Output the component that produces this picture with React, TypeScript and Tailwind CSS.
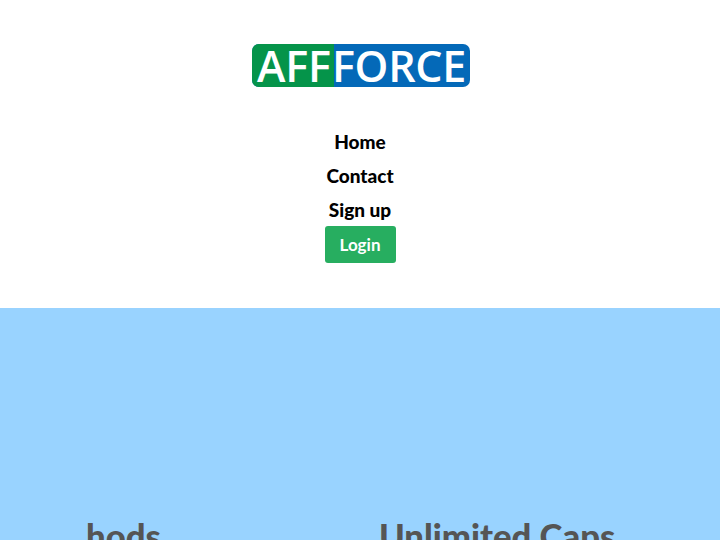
export default function App() {
  const links = ["Home", "Contact", "Sign up"];
  return (
    <div className="w-[720px] h-[540px] overflow-hidden bg-white font-['Lato','Noto_Sans',sans-serif]">
      <header className="h-[308px] flex flex-col items-center pt-[44px]">
        <div className="w-[218px] h-[43px] rounded-[7px] overflow-hidden flex bg-[#0469b8] text-white text-[43px] leading-[43px] font-semibold font-['Open_Sans',sans-serif] ml-[2px]">
          <span className="w-[82px] shrink-0 bg-[#05944a] pl-[5px] tracking-[-0.2px]">AFF</span>
          <span className="-ml-[2px] tracking-[-0.3px]">FORCE</span>
        </div>
        <nav className="mt-[38px] flex flex-col items-center">
          {links.map((l) => (
            <a key={l} className="h-[34px] leading-[34px] text-[19px] font-black text-black">{l}</a>
          ))}
          <button className="w-[71px] h-[37px] bg-[#27ae60] rounded-[3px] text-white text-[17px] font-bold -mt-[1px]">Login</button>
        </nav>
      </header>
      <section className="h-[232px] bg-[#99d3ff] pt-[204px] text-[34.7px] leading-[48px] font-black text-[#555]">
        <div className="flex">
          <span className="ml-[86px] w-[293px]">hods</span>
          <span>Unlimited Caps</span>
        </div>
      </section>
    </div>
  );
}
